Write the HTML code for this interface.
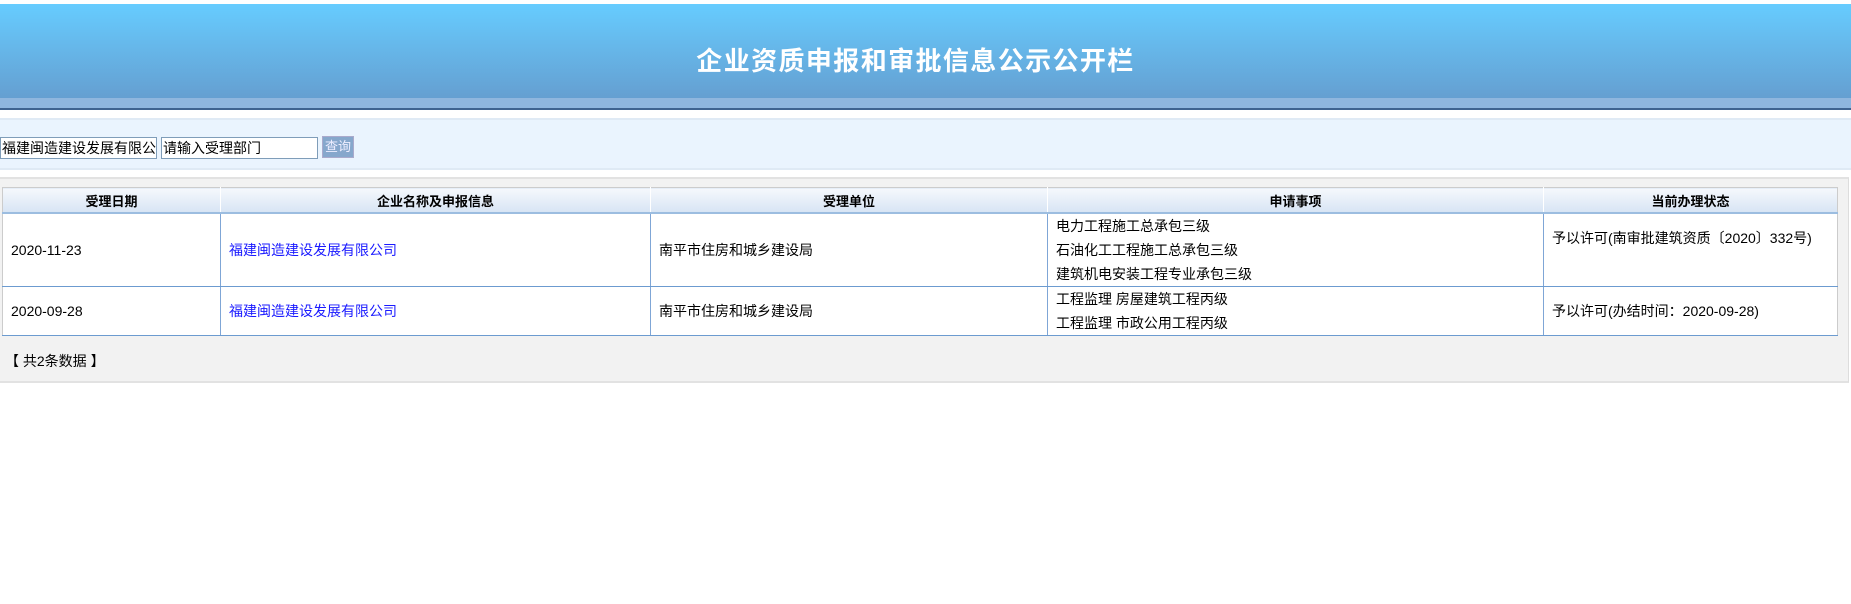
<!DOCTYPE html>
<html><head><meta charset="utf-8"><style>
body{margin:0;width:1851px;height:604px;background:#fff;font-family:"Liberation Sans","Noto Sans CJK SC",sans-serif;font-size:14px;color:#000;position:relative;overflow:hidden}
.hd{position:absolute;left:0;top:4px;width:1851px;height:94px;background:linear-gradient(#66ccff,#659fd1);}
.hd h1{margin:0;text-align:center;padding-top:22px;padding-right:20px;line-height:70px;color:#fff;font-size:26px;letter-spacing:1.4px;font-weight:bold}
.stripe{position:absolute;left:0;top:98px;width:1851px;height:10px;background:#8fb6de;border-bottom:2px solid #3f6390}
.sp{position:absolute;left:0;top:118px;width:1851px;height:48px;background:#eaf4fe;border-top:2px solid #dfeaf5;border-bottom:2px solid #dfeaf5}
.inp{position:absolute;top:17px;border:1px solid #7f9db9;background:#fff;font-size:14px;line-height:20px;padding-left:1px;box-sizing:border-box;height:22px;overflow:hidden;white-space:nowrap}
.btn{position:absolute;left:322px;top:16px;width:32px;height:22px;background:#86a7cc;border:1px solid #aac;color:#eef;font-size:13px;text-align:center;line-height:20px;box-sizing:border-box}
.gp{position:absolute;left:0;top:177px;width:1848px;height:202px;background:#f2f2f2;border-top:2px solid #e2e2e2;border-bottom:2px solid #e2e2e2;border-right:1px solid #ddd}
table{position:absolute;left:2px;top:8px;width:1836px;border-collapse:collapse;background:#fff;border:1px solid #ccc}
th{height:24px;background:linear-gradient(#f5f8fc,#d7e4f4);font-size:13px;border-bottom:2px solid #9cbde0;border-left:1px solid #fff;padding:0}
td{border-left:1px solid #7fa6d6;border-bottom:1.5px solid #6c9bd0;padding:0 0 0 8px;vertical-align:middle}
td:first-child,th:first-child{border-left:none}
a{color:#1a1aff;text-decoration:none}
.l{line-height:24px}
.ft{position:absolute;left:5px;top:172px}
</style></head><body>
<div class="hd"><h1>企业资质申报和审批信息公示公开栏</h1></div>
<div class="stripe"></div>
<div class="sp">
<div class="inp" style="left:0;width:157px">福建闽造建设发展有限公司</div>
<div class="inp" style="left:161px;width:157px">请输入受理部门</div>
<div class="btn">查询</div>
</div>
<div class="gp">
<table>
<tr><th style="width:217px">受理日期</th><th style="width:429px">企业名称及申报信息</th><th style="width:396px">受理单位</th><th style="width:495px">申请事项</th><th>当前办理状态</th></tr>
<tr style="height:72px"><td>2020-11-23</td><td><a>福建闽造建设发展有限公司</a></td><td>南平市住房和城乡建设局</td><td class="l">电力工程施工总承包三级<br>石油化工工程施工总承包三级<br>建筑机电安装工程专业承包三级</td><td style="vertical-align:top;padding-top:14px">予以许可(南审批建筑资质〔2020〕332号)</td></tr>
<tr style="height:48px"><td>2020-09-28</td><td><a>福建闽造建设发展有限公司</a></td><td>南平市住房和城乡建设局</td><td class="l">工程监理 房屋建筑工程丙级<br>工程监理 市政公用工程丙级</td><td>予以许可(办结时间：2020-09-28)</td></tr>
</table>
<div class="ft">【 共2条数据 】</div>
</div>
</body></html>
